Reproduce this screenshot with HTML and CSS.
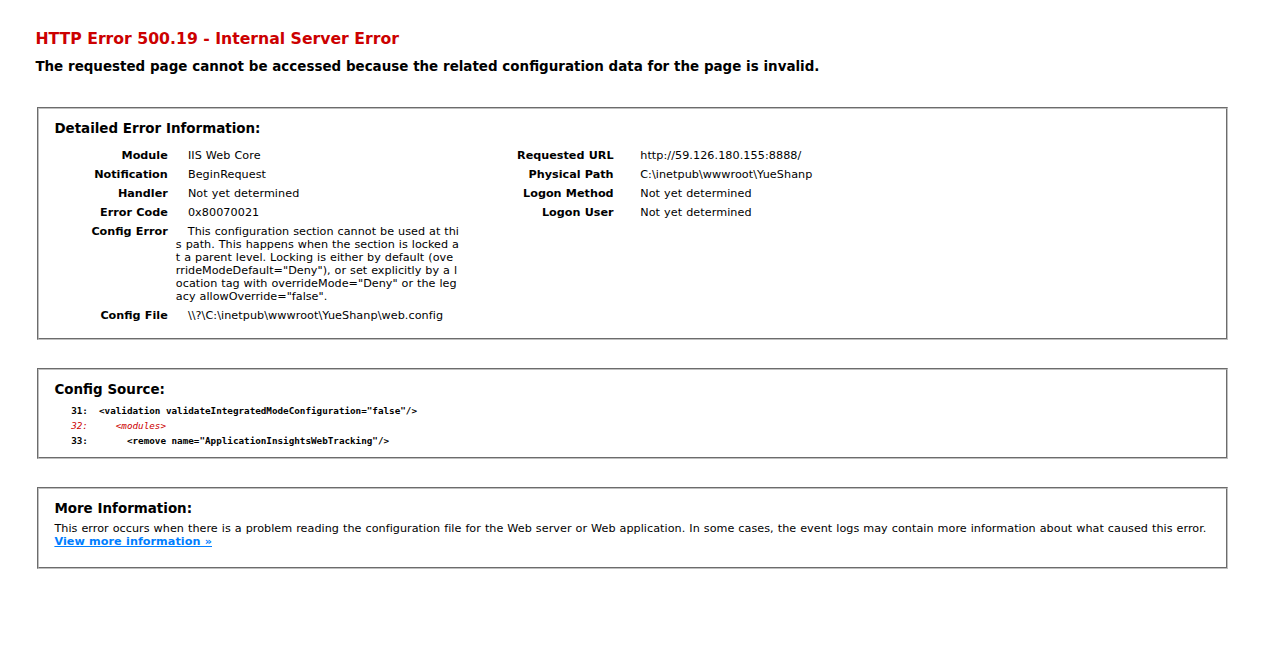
FILE: index.html
```html
<!DOCTYPE html>
<html>
<head>
<meta charset="utf-8">
<title>IIS 8.5 Detailed Error - 500.19 - Internal Server Error</title>
<link rel="stylesheet" href="styles.css">
</head>
<body>
<div class="content">
  <div class="content-container header-container">
    <h3>HTTP Error 500.19 - Internal Server Error</h3>
    <h4>The requested page cannot be accessed because the related configuration data for the page is invalid.</h4>
  </div>
  <div class="content-container">
    <fieldset>
      <h4>Detailed Error Information:</h4>
      <div class="details-left">
        <table>
          <tr><th>Module</th><td>&nbsp;&nbsp;&nbsp;IIS Web Core</td></tr>
          <tr><th>Notification</th><td>&nbsp;&nbsp;&nbsp;BeginRequest</td></tr>
          <tr><th>Handler</th><td>&nbsp;&nbsp;&nbsp;Not yet determined</td></tr>
          <tr><th>Error Code</th><td>&nbsp;&nbsp;&nbsp;0x80070021</td></tr>
          <tr><th>Config Error</th><td class="config-error">&nbsp;&nbsp;&nbsp;This configuration section cannot be used at thi<br>s path. This happens when the section is locked a<br>t a parent level. Locking is either by default (ove<br>rrideModeDefault="Deny"), or set explicitly by a l<br>ocation tag with overrideMode="Deny" or the leg<br>acy allowOverride="false". </td></tr>
          <tr><th>Config File</th><td>&nbsp;&nbsp;&nbsp;\\?\C:\inetpub\wwwroot\YueShanp\web.config</td></tr>
        </table>
      </div>
      <div class="details-right">
        <table>
          <tr><th>Requested URL</th><td>&nbsp;&nbsp;&nbsp;http://59.126.180.155:8888/</td></tr>
          <tr><th>Physical Path</th><td>&nbsp;&nbsp;&nbsp;C:\inetpub\wwwroot\YueShanp</td></tr>
          <tr><th>Logon Method</th><td>&nbsp;&nbsp;&nbsp;Not yet determined</td></tr>
          <tr><th>Logon User</th><td>&nbsp;&nbsp;&nbsp;Not yet determined</td></tr>
        </table>
      </div>
      <div class="clear"></div>
    </fieldset>
  </div>
  <div class="content-container">
    <fieldset>
      <h4>Config Source:</h4>
      <div class="config-source"><pre><code>   31:  &lt;validation validateIntegratedModeConfiguration="false"/&gt;
<span class="highlight-code">   32:     &lt;modules&gt;</span>
   33:       &lt;remove name="ApplicationInsightsWebTracking"/&gt;
</code></pre></div>
    </fieldset>
  </div>
  <div class="content-container">
    <fieldset class="more-info">
      <h4>More Information:</h4>
      This error occurs when there is a problem reading the configuration file for the Web server or Web application. In some cases, the event logs may contain more information about what caused this error.
      <p><a href="#">View more information &raquo;</a></p>
    </fieldset>
  </div>
</div>
</body>
</html>
```

FILE: styles.css
```css
body {
  margin: 0;
  font-size: 11.2px;
  line-height: 13px;
  font-family: "DejaVu Sans", Verdana, sans-serif;
  word-spacing: 0.4px;
  color: #000;
  background: #fff;
}
.content {
  margin: 0 0 0 2%;
}
.content-container {
  background: #fff;
  width: 96%;
  margin-top: 8px;
  padding: 10px;
}
.header-container {
  padding-top: 11px;
  padding-bottom: 9px;
}
.content-container p {
  margin: 0 0 10px 0;
}
fieldset {
  margin: 0 2px;
  padding: 1px 15px 9px 15px;
  border: 2px groove #c0c0c0;
  word-break: break-all;
  min-width: 0;
}
.more-info {
  letter-spacing: 0.04px;
}
h3 {
  font-size: 15.68px;
  line-height: 19px;
  margin: 10px 0 0 0;
  color: #cc0000;
  word-spacing: 0;
}
h4 {
  font-size: 13.44px;
  line-height: 17px;
  margin: 10px 0 5px 0;
  word-spacing: 0.1px;
  letter-spacing: 0;
}
.details-left {
  width: 35%;
  float: left;
  margin-right: 2%;
}
.details-right {
  width: 63%;
  float: left;
  overflow: hidden;
}
.clear {
  clear: both;
}
table {
  margin: 4px 0;
  width: 100%;
  border: none;
  border-collapse: separate;
  border-spacing: 0;
}
td, th {
  vertical-align: top;
  padding: 3px 0;
  text-align: left;
  font-weight: normal;
  border: none;
}
td {
  letter-spacing: 0.07px;
}
td.config-error {
  letter-spacing: 0.02px;
  white-space: nowrap;
}
th {
  width: 30%;
  text-align: right;
  padding-right: 2%;
  font-weight: bold;
}
.details-right th {
  width: 20%;
}
pre {
  margin: 0;
  font-size: 10px;
  line-height: 15px;
  word-wrap: break-word;
}
code {
  font-family: "DejaVu Sans Mono", "Liberation Mono", monospace;
  font-size: 9.27px;
  font-weight: bold;
  word-spacing: 0;
  letter-spacing: 0;
  color: #000;
}
.highlight-code {
  color: #cc0000;
  font-style: italic;
  font-weight: normal;
}
a:link, a:visited {
  color: #007eff;
  font-weight: bold;
}
```
